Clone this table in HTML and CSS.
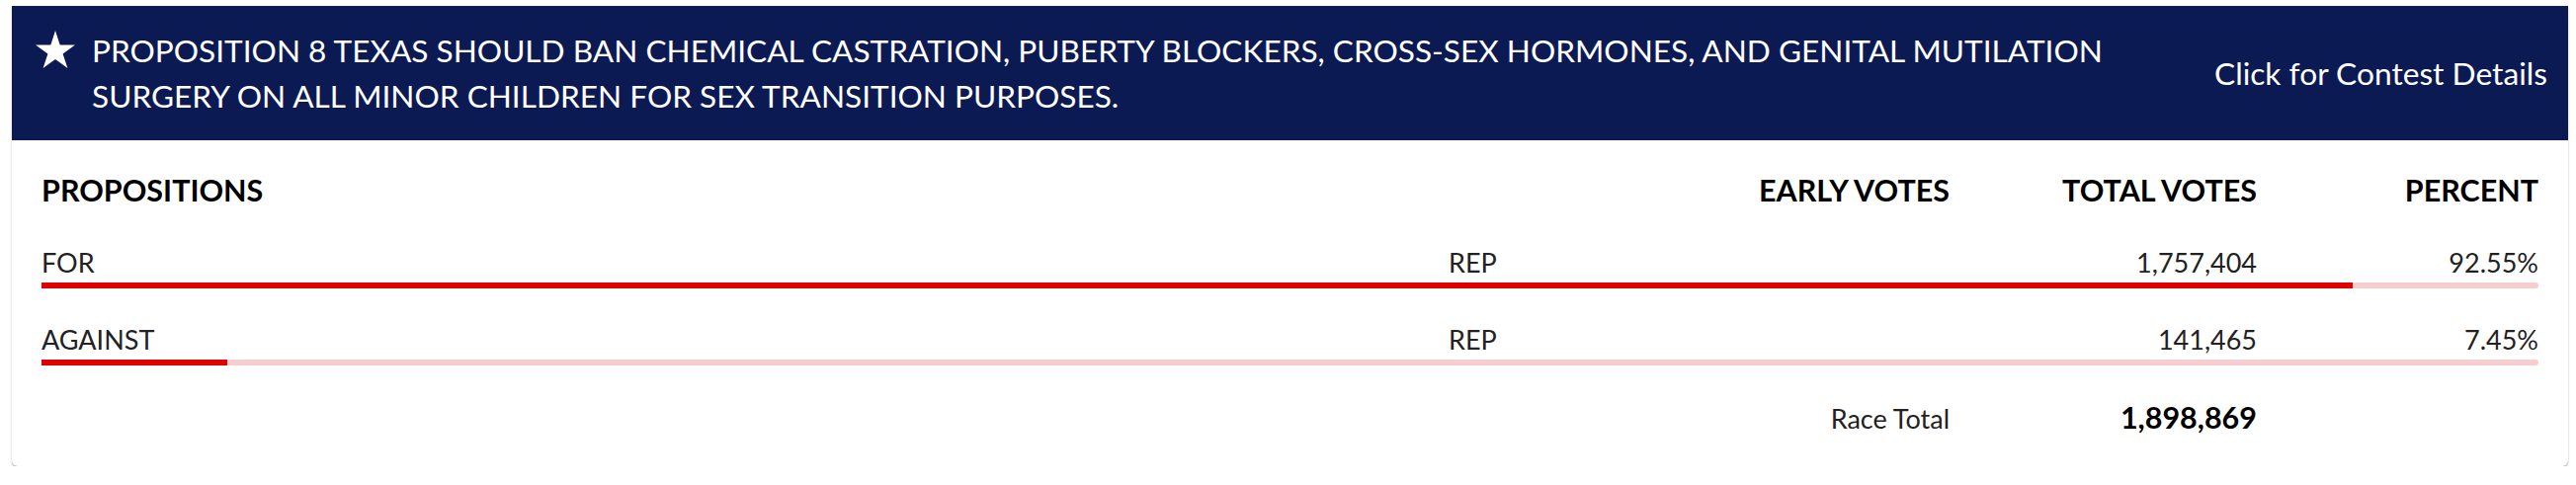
FILE: index.html
```html
<!DOCTYPE html>
<html lang="en">
<head>
<meta charset="utf-8">
<title>Proposition 8</title>
<link rel="stylesheet" href="styles.css">
</head>
<body>
<div class="contest">
  <div class="contest-head">
    <svg class="star" viewBox="0 0 40 38" width="40" height="38" aria-hidden="true">
      <polygon points="20,0 24.7,14.5 40,14.5 27.6,23.5 32.4,38 20,29 7.6,38 12.4,23.5 0,14.5 15.3,14.5" fill="#fff"/>
    </svg>
    <div class="title">PROPOSITION 8 TEXAS SHOULD BAN CHEMICAL CASTRATION, PUBERTY BLOCKERS, CROSS-SEX HORMONES, AND GENITAL MUTILATION SURGERY ON ALL MINOR CHILDREN FOR SEX TRANSITION PURPOSES.</div>
    <div class="details">Click for Contest Details</div>
  </div>
  <div class="results">
    <div class="grid head-row">
      <div class="c-name">PROPOSITIONS</div>
      <div class="c-party"></div>
      <div class="c-num">EARLY VOTES</div>
      <div class="c-num">TOTAL VOTES</div>
      <div class="c-num">PERCENT</div>
    </div>
    <div class="row">
      <div class="grid">
        <div class="c-name">FOR</div>
        <div class="c-party">REP</div>
        <div class="c-num"></div>
        <div class="c-num">1,757,404</div>
        <div class="c-num">92.55%</div>
      </div>
      <div class="bar"><div class="fill" style="width:92.55%"></div></div>
    </div>
    <div class="row">
      <div class="grid">
        <div class="c-name">AGAINST</div>
        <div class="c-party">REP</div>
        <div class="c-num"></div>
        <div class="c-num">141,465</div>
        <div class="c-num">7.45%</div>
      </div>
      <div class="bar"><div class="fill" style="width:7.45%"></div></div>
    </div>
    <div class="grid total-row">
      <div class="c-name"></div>
      <div class="c-party"></div>
      <div class="c-num">Race Total</div>
      <div class="c-num strong">1,898,869</div>
      <div class="c-num"></div>
    </div>
  </div>
</div>
</body>
</html>
```
FILE: styles.css
```css
html, body {
  margin: 0;
  padding: 0;
  background: #fff;
}
body {
  padding: 6px 8px 0 12px;
  font-family: Lato, "Open Sans", "Liberation Sans", sans-serif;
  color: #222;
}
.contest {
  background: #fff;
  border-radius: 0 0 6px 6px;
  box-shadow: 0 2px 2px rgba(0, 0, 0, 0.28), 0 0 1px rgba(0, 0, 0, 0.12);
}
.contest-head {
  background: #0c1a53;
  color: #fff;
  display: flex;
  align-items: center;
  padding: 22px 21px 22px 24px;
  height: 136px;
  box-sizing: border-box;
}
.star {
  flex: none;
  align-self: flex-start;
  margin-top: 3px;
  margin-right: 17px;
}
.title {
  flex: 1;
  font-size: 31.6px;
  line-height: 46px;
  padding-right: 60px;
}
.details {
  flex: none;
  font-size: 31.7px;
  line-height: 36px;
}
.results {
  padding: 35px 30px 35px 30px;
}
.grid {
  display: grid;
  grid-template-columns: 1424px 200px 307px 311px 285px;
  align-items: baseline;
  font-size: 27px;
  line-height: 30px;
  height: 30px;
  white-space: nowrap;
}
.c-num {
  text-align: right;
}
.head-row {
  font-weight: 700;
  font-size: 30.5px;
  color: #000;
  margin-bottom: 44px;
}
.row {
  margin-bottom: 37px;
}
.bar {
  margin-top: 5px;
  height: 6px;
  background: #f7cdd0;
  border-radius: 0 3px 3px 0;
}
.fill {
  height: 100%;
  background: #df0000;
}
.total-row {
  margin-top: 1px;
}
.strong {
  font-weight: 700;
  font-size: 30.5px;
  color: #000;
}
```
